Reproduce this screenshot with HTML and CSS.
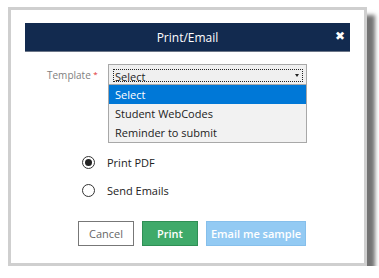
FILE: index.html
```html
<!DOCTYPE html>
<html lang="en">
<head>
  <meta charset="UTF-8" />
  <title>Print/Email</title>
  <link rel="stylesheet" href="styles.css">
</head>
<body>
  <div class="frame">
    <div class="dialog-head">
      <span class="dialog-title">Print/Email</span>
      <span class="dialog-close">&#10006;</span>
    </div>

    <!-- Template picker -->
    <div class="field-row">
      <label class="field-label">Template <span class="req">*</span></label>
      <div class="select-wrap">
        <div class="select-box">
          <div class="select-focus">
            <span class="select-value">Select</span>
            <span class="select-arrow"></span>
          </div>
        </div>
        <ul class="select-list">
          <li class="active">Select</li>
          <li>Student WebCodes</li>
          <li>Reminder to submit</li>
        </ul>
      </div>
    </div>

    <div class="radio-group">
      <div class="radio-row">
        <span class="radio checked"></span>
        <span>Print PDF</span>
      </div>
      <div class="radio-row">
        <span class="radio"></span>
        <span>Send Emails</span>
      </div>
    </div>

    <div class="actions">
      <button class="btn btn-cancel">Cancel</button>
      <button class="btn btn-print">Print</button>
      <button class="btn btn-email">Email me sample</button>
    </div>
  </div>
</body>
</html>
```

FILE: styles.css
```css
body {
  margin: 0;
  background: #fff;
  font-family: 'Open Sans', 'Noto Sans', sans-serif;
  font-size: 11px;
  color: #222;
}

.frame {
  margin: 7px 0 0 8px;
  width: 359px;
  height: 259px;
  border: 3px solid #cfcfcf;
  background: #fff;
  box-shadow: 8px 8px 4px rgba(0, 0, 0, 0.55);
  padding: 13px 14px 0;
  box-sizing: border-box;
}

.dialog-head {
  height: 29px;
  background: #122a4f;
  border-bottom: 1px solid #6b7587;
  box-sizing: border-box;
  display: flex;
  align-items: center;
  justify-content: center;
  position: relative;
  color: #fff;
}

.dialog-title {
  font-size: 12px;
}

.dialog-close {
  position: absolute;
  right: 5px;
  top: 6px;
  font-size: 12px;
  font-family: 'DejaVu Sans', sans-serif;
  font-weight: bold;
}

.field-row {
  display: flex;
  margin-top: 12px;
}

.field-label {
  width: 83px;
  box-sizing: border-box;
  padding-left: 22px;
  padding-top: 4px;
  color: #808080;
  font-size: 10px;
}

.req {
  color: #e03030;
  font-size: 8px;
  vertical-align: top;
}

.select-wrap {
  position: relative;
  width: 199px;
}

.select-box {
  height: 21px;
  border: 1px solid #a8a8a8;
  background: #f0f0f0;
  box-sizing: border-box;
  padding: 4px 3px 0 4px;
}

.select-focus {
  height: 11px;
  border: 1px dotted #222;
  display: flex;
  justify-content: space-between;
  align-items: flex-start;
  padding-left: 1px;
}

.select-value {
  line-height: 14px;
  margin-top: 0;
  height: 12px;
}

.select-arrow {
  width: 0;
  height: 0;
  border-left: 2px solid transparent;
  border-right: 2px solid transparent;
  border-top: 3px solid #222;
  margin: 4px 3px 0 0;
}

.select-list {
  position: absolute;
  left: 0;
  top: 21px;
  width: 199px;
  margin: 0;
  padding: 0;
  list-style: none;
  background: #f2f2f2;
  border: 1px solid #a8a8a8;
  border-top: none;
  box-sizing: border-box;
}

.select-list li {
  height: 19px;
  line-height: 19px;
  padding-left: 6px;
}

.select-list li.active {
  background: #0078d7;
  color: #fff;
}

.radio-group {
  margin-top: 67px;
  padding-left: 57px;
  display: flex;
  flex-direction: column;
  gap: 8px;
}

.radio-row {
  display: flex;
  align-items: center;
  gap: 12px;
  height: 20px;
}

.radio {
  width: 13px;
  height: 13px;
  border: 1px solid #333;
  border-radius: 50%;
  box-sizing: border-box;
  display: flex;
  align-items: center;
  justify-content: center;
}

.radio.checked::after {
  content: "";
  width: 7px;
  height: 7px;
  border-radius: 50%;
  background: #222;
}

.actions {
  display: flex;
  gap: 8px;
  margin-top: 21px;
  padding-left: 53px;
}

.btn {
  height: 25px;
  font-family: 'Open Sans', sans-serif;
  font-size: 11px;
  border: 1px solid transparent;
  padding: 0;
  color: #fff;
}

.btn-cancel {
  width: 56px;
  background: #fff;
  border-color: #777;
  color: #666;
}

.btn-print {
  width: 56px;
  background: #3faa6a;
  border-color: #2f8f55;
  font-weight: 600;
}

.btn-email {
  width: 100px;
  background: #93caf3;
  border-color: #86bfeb;
  font-weight: 600;
}
```
